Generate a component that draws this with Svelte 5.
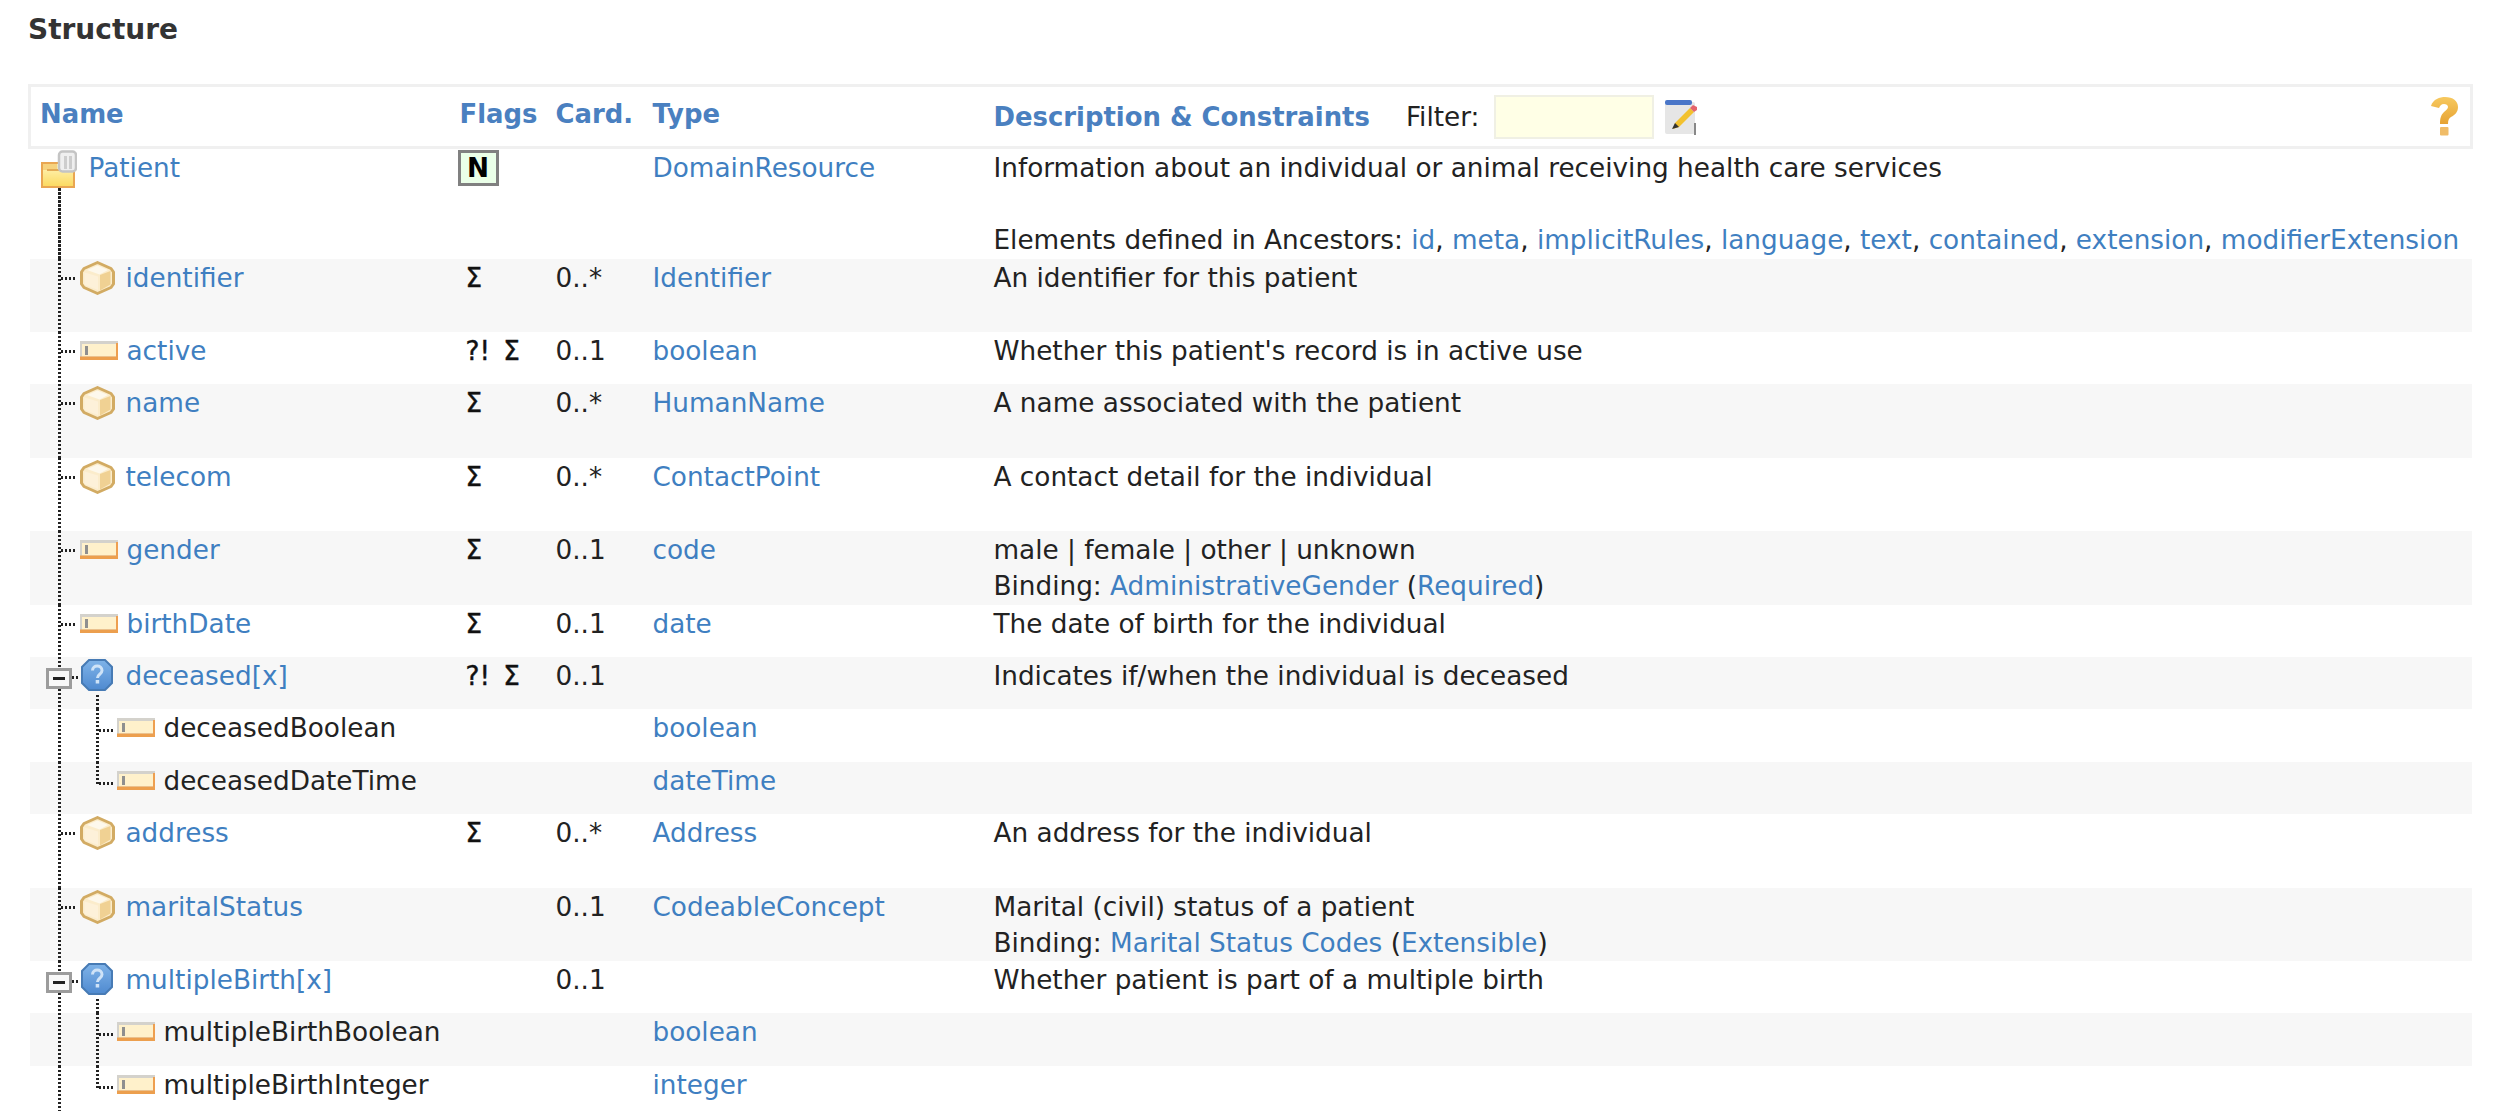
<script>
  const rows = [
    { name: 'identifier', kind: 'cube', flags: 'Σ', card: '0..*', type: 'Identifier', desc: 'An identifier for this patient', tall: true },
    { name: 'active', kind: 'prim', flags: '?! Σ', card: '0..1', type: 'boolean', desc: "Whether this patient's record is in active use" },
    { name: 'name', kind: 'cube', flags: 'Σ', card: '0..*', type: 'HumanName', desc: 'A name associated with the patient', tall: true },
    { name: 'telecom', kind: 'cube', flags: 'Σ', card: '0..*', type: 'ContactPoint', desc: 'A contact detail for the individual', tall: true },
    { name: 'gender', kind: 'prim', flags: 'Σ', card: '0..1', type: 'code', desc: 'male | female | other | unknown', binding: ['AdministrativeGender', 'Required'] },
    { name: 'birthDate', kind: 'prim', flags: 'Σ', card: '0..1', type: 'date', desc: 'The date of birth for the individual' },
    { name: 'deceased[x]', kind: 'choice', flags: '?! Σ', card: '0..1', desc: 'Indicates if/when the individual is deceased' },
    { name: 'deceasedBoolean', kind: 'prim', child: 'first', type: 'boolean' },
    { name: 'deceasedDateTime', kind: 'prim', child: 'last', type: 'dateTime' },
    { name: 'address', kind: 'cube', flags: 'Σ', card: '0..*', type: 'Address', desc: 'An address for the individual', tall: true },
    { name: 'maritalStatus', kind: 'cube', card: '0..1', type: 'CodeableConcept', desc: 'Marital (civil) status of a patient', binding: ['Marital Status Codes', 'Extensible'] },
    { name: 'multipleBirth[x]', kind: 'choice', card: '0..1', desc: 'Whether patient is part of a multiple birth' },
    { name: 'multipleBirthBoolean', kind: 'prim', child: 'first', type: 'boolean' },
    { name: 'multipleBirthInteger', kind: 'prim', child: 'last', type: 'integer' }
  ];

  const ancestors = ['id', 'meta', 'implicitRules', 'language', 'text', 'contained', 'extension', 'modifierExtension'];
</script>

{#snippet cube()}
  <svg class="icon cube" viewBox="0 0 35 34">
    <path d="M17.500 1.500 31 7.500 33.500 11v12L31 26.500 17.500 32.500 4 26.500 1.500 23V11L4 7.500z" fill="#fbeccb" stroke="#d2ab63" stroke-width="3" stroke-linejoin="round" />
    <path d="M17.500 4.500 28 9 19.500 13.500 7 9z" fill="#fdf8ec" />
    <path d="M20 14 30.500 10V23.500L20 29.500z" fill="#f0d193" />
    <path d="M4.500 11.500 18 15.500V29L4.500 24z" fill="#fdf1d9" />
  </svg>
{/snippet}

{#snippet prim()}
  <svg class="icon prim" viewBox="0 0 38 19">
    <rect width="38" height="19" fill="#d4d2cc" />
    <rect x="2" y="3" width="35" height="12.500" fill="#fff1cb" />
    <rect y="15.500" width="38" height="3.500" fill="#ec9f4e" />
    <rect x="36" y="2" width="2" height="15" fill="#ee9f50" />
    <rect x="5" y="5" width="3" height="9" fill="#8f8f8f" />
  </svg>
{/snippet}

{#snippet choice()}
  <svg class="icon choice" viewBox="0 0 32 32">
    <defs>
      <linearGradient id="choiceFill" x1="0" y1="0" x2="0" y2="1">
        <stop offset="0" stop-color="#7fb3e8" />
        <stop offset="1" stop-color="#4f8ad0" />
      </linearGradient>
    </defs>
    <path d="M8 1h16l7 7v16l-7 7H8l-7-7V8z" fill="url(#choiceFill)" stroke="#477bb5" stroke-width="2" />
    <path d="M11.500 11.500c0-6 9.500-6 9.500 0 0 4-4.500 3.500-4.500 7.500" fill="none" stroke="#cfe3f7" stroke-width="3" />
    <rect x="14.700" y="21" width="3.500" height="3.500" fill="#cfe3f7" />
  </svg>
{/snippet}

<main>
  <h3>Structure</h3>
  <table>
    <colgroup>
      <col class="c-name" />
      <col class="c-flags" />
      <col class="c-card" />
      <col class="c-type" />
      <col />
    </colgroup>
    <thead>
      <tr>
        <th>Name</th>
        <th>Flags</th>
        <th>Card.</th>
        <th>Type</th>
        <th class="desc-head">
          <span class="filter-row">
            <span class="th-label">Description &amp; Constraints</span>
            <span class="filter-label">Filter:</span>
            <input class="filter" type="text" />
            <svg class="edit" viewBox="0 0 36 36">
              <rect x="2" y="3" width="30" height="32" rx="2" fill="#e6e6e6" />
              <rect x="2" y="1" width="27" height="5" rx="2" fill="#4a76c8" />
              <rect x="31" y="24" width="2" height="12" fill="#888" />
              <path d="M12 24 27 9l4 4-15 15-6 2z" fill="#f2c12e" />
              <path d="M27 9l3-3 4 2v3l-3 2z" fill="#e4646c" />
              <path d="M12 24l4 4-7 2z" fill="#333" />
            </svg>
            <svg class="help" viewBox="0 0 30 40">
              <defs>
                <linearGradient id="helpFill" x1="0" y1="0" x2="0" y2="1">
                  <stop offset="0" stop-color="#f7c95f" />
                  <stop offset="1" stop-color="#e6a233" />
                </linearGradient>
              </defs>
              <path d="M2 9C4 2 11 0 16 0c8 0 13 4 13 10 0 5-3 8-7 10-2 1-3 3-3 7H11c0-6 1-9 4-12 2-2 4-3 4-5s-2-3-4-3c-3 0-4 2-5 4z" fill="url(#helpFill)" />
              <rect x="11" y="30" width="8.500" height="8.500" rx="1" fill="#f0bc68" />
            </svg>
          </span>
        </th>
      </tr>
    </thead>
    <tbody>
      <tr>
        <td class="name root-cell">
          <span class="v-main root"></span>
          <span class="tree">
            <svg class="icon folder" viewBox="0 0 36 38">
              <defs>
                <linearGradient id="folderFill" x1="0" y1="0" x2="0" y2="1">
                  <stop offset="0" stop-color="#fff6c0" />
                  <stop offset="1" stop-color="#fbd95e" />
                </linearGradient>
              </defs>
              <rect x="1" y="13" width="32" height="24" fill="url(#folderFill)" stroke="#e9a652" stroke-width="2" />
              <rect x="2" y="14" width="14" height="6" fill="#f6d27e" />
              <rect x="6" y="19" width="14" height="2" fill="#e3aa55" />
              <rect x="18" y="1.500" width="17" height="20" rx="3.500" fill="#efefef" stroke="#c4c4c4" stroke-width="2.500" />
              <rect x="23" y="6" width="3" height="13" fill="#cdcdcd" />
              <rect x="28" y="6" width="3" height="13" fill="#cdcdcd" />
            </svg>
            <a href="#patient">Patient</a>
          </span>
        </td>
        <td><span class="badge">N</span></td>
        <td></td>
        <td><a href="#type">DomainResource</a></td>
        <td class="desc">
          Information about an individual or animal receiving health care services<br /><br />
          Elements defined in Ancestors:
          {#each ancestors as item, i}<a href="#anc">{item}</a>{i < ancestors.length - 1 ? ', ' : ''}{/each}
        </td>
      </tr>
      {#each rows as row}
        <tr>
          <td class="name">
            <span class="v-main"></span>
            {#if row.child}
              <span class="v-child" class:last={row.child === 'last'}></span>
              <span class="h-stub second"></span>
            {:else if row.kind === 'choice'}
              <span class="v-child stem"></span>
              <span class="h-stub toggle-link"></span>
              <span class="toggle"><span></span></span>
            {:else}
              <span class="h-stub"></span>
            {/if}
            <span class="tree" class:l1={!row.child} class:l2={row.child}>
              {#if row.kind === 'cube'}{@render cube()}{:else if row.kind === 'prim'}{@render prim()}{:else}{@render choice()}{/if}
              {#if row.child}<span>{row.name}</span>{:else}<a href="#el">{row.name}</a>{/if}
            </span>
          </td>
          <td><span class="flags">{row.flags ?? ''}</span></td>
          <td>{row.card ?? ''}</td>
          <td>{#if row.type}<a href="#type">{row.type}</a>{/if}</td>
          <td class="desc">
            {row.desc ?? ''}
            {#if row.binding}<br />Binding: <a href="#b">{row.binding[0]}</a> (<a href="#s">{row.binding[1]}</a>){/if}
            {#if row.tall}<br />&nbsp;{/if}
          </td>
        </tr>
      {/each}
    </tbody>
  </table>
</main>

<style>
  :global(html), :global(body) {
    overflow: hidden;
    background: #fff;
  }

  main {
    padding: 0 27px 0 28px;
    font-family: "DejaVu Sans", Verdana, sans-serif;
    font-size: 26.3px;
    color: #222;
  }

  h3 {
    margin: 0;
    padding-top: 14px;
    height: 84px;
    box-sizing: border-box;
    font-size: 28px;
    line-height: 32px;
    font-weight: 700;
    color: #333;
  }

  table {
    width: 2445px;
    table-layout: fixed;
    border-collapse: collapse;
  }

  .c-name { width: 420px; }
  .c-flags { width: 96px; }
  .c-card { width: 97px; }
  .c-type { width: 341px; }

  a {
    color: #3f7fc1;
    text-decoration: none;
  }

  thead tr {
    border: 3px solid #f0f0f0;
    height: 62px;
  }

  th {
    padding: 0 0 6px 10px;
    text-align: left;
    font-size: 25.9px;
    color: #4a80c0;
    vertical-align: middle;
    white-space: nowrap;
  }

  th:first-child {
    padding-left: 9px;
  }

  .desc-head {
    padding-bottom: 0;
    font-weight: 400;
  }

  .filter-row {
    display: flex;
    align-items: center;
  }

  .th-label {
    font-weight: 700;
  }

  .filter-label {
    margin-left: 36px;
    color: #222;
    font-size: 26.3px;
  }

  .filter {
    width: 160px;
    height: 44px;
    box-sizing: border-box;
    margin-left: 15px;
    padding: 0;
    border: 2px solid #f0f0e4;
    background: #ffffe6;
  }

  .edit {
    width: 36px;
    height: 36px;
    margin-left: 9px;
    filter: blur(0.5px);
  }

  .help {
    width: 30px;
    height: 40px;
    margin-left: auto;
    margin-right: 11px;
    filter: blur(0.6px);
  }

  tbody tr:nth-child(even) {
    background: #f7f7f7;
  }

  td {
    padding: 1px 0 0 10px;
    vertical-align: top;
    line-height: 36.2px;
    white-space: nowrap;
  }

  td.name {
    position: relative;
    height: 52.4px;
    padding: 0;
  }

  td.root-cell {
    height: 109.6px;
  }

  .tree {
    display: flex;
    align-items: flex-start;
    position: relative;
    padding-left: 11px;
    gap: 10px;
  }

  .tree a, .tree > span {
    margin-top: 1px;
  }

  .tree.l1 {
    padding-left: 50px;
  }

  .tree.l2 {
    padding-left: 87px;
  }

  .icon {
    flex: none;
    filter: blur(0.4px);
  }

  .folder {
    width: 36px;
    height: 38px;
    margin-top: 1px;
    margin-right: 2px;
  }

  .cube {
    width: 35px;
    height: 34px;
    margin-top: 2px;
    margin-right: 1px;
  }

  .prim {
    width: 38px;
    height: 19px;
    margin-top: 9px;
    margin-right: -1px;
  }

  .choice {
    width: 32px;
    height: 32px;
    margin-top: 2px;
    margin-left: 1px;
    margin-right: 3px;
  }

  /* tree connector lines, drawn over the name cell */
  .v-main, .v-child {
    position: absolute;
    width: 3px;
    background: repeating-linear-gradient(to bottom, #222 0 2.5px, transparent 2.5px 4px);
  }

  .v-main {
    left: 28px;
    top: 0;
    bottom: 0;
  }

  .v-main.root {
    top: 39px;
  }

  .v-child {
    left: 66px;
    top: 0;
    bottom: 0;
  }

  .v-child.last {
    bottom: auto;
    height: 22px;
  }

  .v-child.stem {
    top: 38px;
  }

  .h-stub {
    position: absolute;
    left: 31px;
    top: 18px;
    width: 16px;
    height: 3px;
    background: repeating-linear-gradient(to right, #222 0 2.5px, transparent 2.5px 4px);
  }

  .h-stub.second {
    left: 69px;
    top: 20px;
  }

  .h-stub.toggle-link {
    left: 42px;
    top: 19px;
    width: 8px;
  }

  .toggle {
    position: absolute;
    left: 16px;
    top: 11px;
    width: 26px;
    height: 21px;
    box-sizing: border-box;
    border: 3px solid #9c9c9c;
    background: #f8f8f8;
    display: flex;
    align-items: center;
    justify-content: center;
  }

  .toggle span {
    width: 12px;
    height: 3px;
    background: #222;
  }

  .badge {
    display: block;
    width: 41px;
    height: 36px;
    margin-left: -2px;
    box-sizing: border-box;
    border: 3px solid #808080;
    background: #eaffe8;
    color: #000;
    font-weight: 700;
    font-size: 26.3px;
    line-height: 30px;
    text-align: center;
  }

  .flags {
    padding-left: 6px;
    word-spacing: 5px;
    color: #111;
    -webkit-text-stroke: 0.4px #111;
  }
</style>
